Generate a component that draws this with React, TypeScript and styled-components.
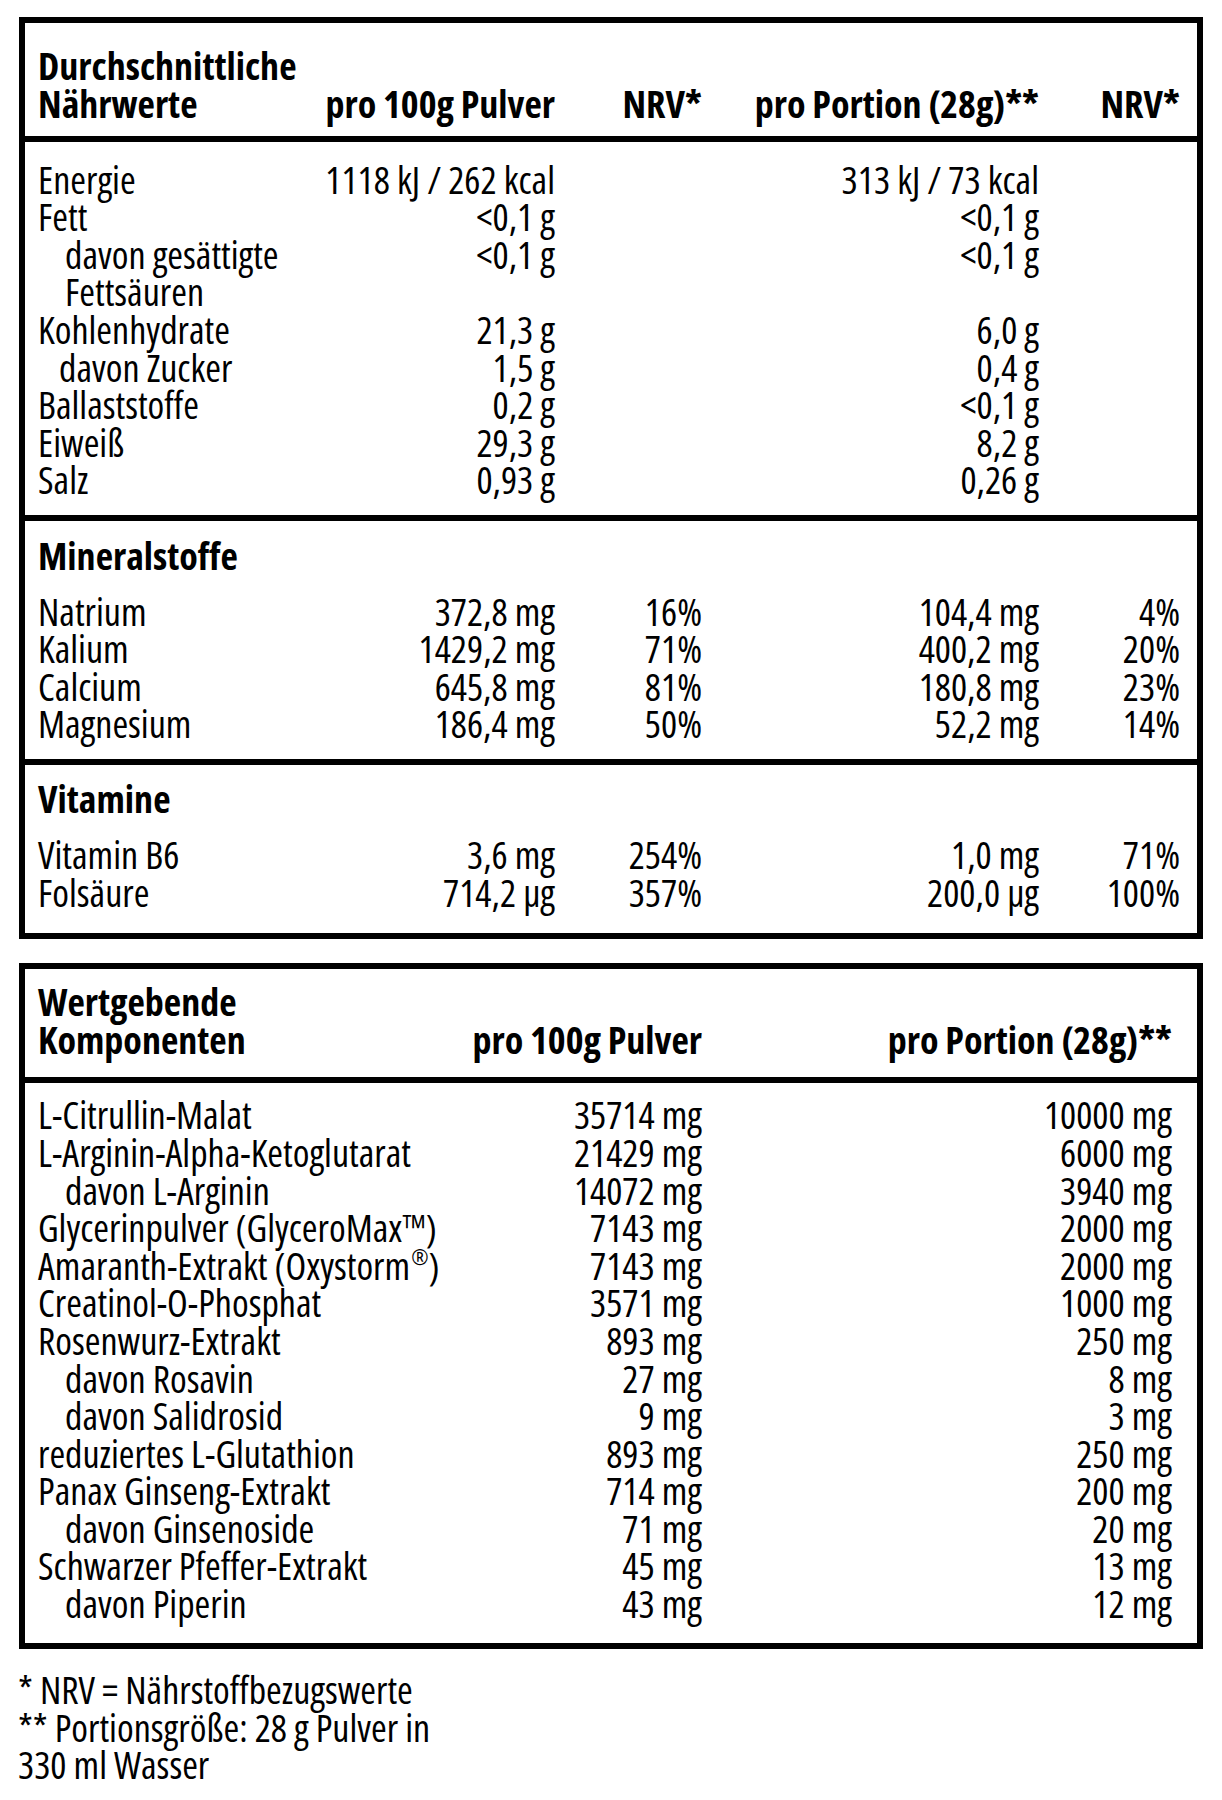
import React from 'react'
import styled, { createGlobalStyle } from 'styled-components'

const GlobalStyle = createGlobalStyle`
  body {
    margin: 0;
    background: #fff;
    color: #000;
    font-family: "Open Sans", "Liberation Sans", sans-serif;
    font-stretch: 75%;
  }
`

const Page = styled.div`
  width: 1222px;
  padding: 17px 0 0 19px;
  box-sizing: border-box;
  font-size: 38px;
  line-height: 37.6px;
`

const Panel = styled.div<{ $gap?: number }>`
  width: 1184px;
  box-sizing: border-box;
  border: 6px solid #000;
  margin-top: ${(p) => p.$gap || 0}px;
`

const Section = styled.div<{ $top: number; $bottom: number; $divider?: boolean; $right: number }>`
  padding: ${(p) => `${p.$top}px ${p.$right}px ${p.$bottom}px 13px`};
  border-top: ${(p) => (p.$divider ? '6px solid #000' : 'none')};
`

const Grid = styled.div<{ $cols: string }>`
  display: grid;
  grid-template-columns: ${(p) => p.$cols};
  align-items: end;
`

const Cell = styled.div<{ $right?: boolean; $bold?: boolean; $indent?: number }>`
  text-align: ${(p) => (p.$right ? 'right' : 'left')};
  font-weight: ${(p) => (p.$bold ? 700 : 400)};
  padding-left: ${(p) => p.$indent || 0}px;
  white-space: nowrap;
`

const SectionTitle = styled.div`
  font-weight: 700;
  margin-bottom: 18.4px;
`

const Reg = styled.span`
  font-size: 0.55em;
  vertical-align: 0.7em;
  line-height: 0;
  margin-left: 1px;
`

const Footnote = styled.div`
  margin: 22.5px 0 0 -1px;
`

// column tracks, label first, values right aligned
const COLS1 = '280px 237px 147px 337px 141px'
const COLS2 = '420px 244px 470px'

type Row = [React.ReactNode, string, string?, string?, string?, number?]

const naehrwerte: Row[] = [
  ['Energie', '1118 kJ / 262 kcal', '', '313 kJ / 73 kcal', ''],
  ['Fett', '<0,1 g', '', '<0,1 g', ''],
  ['davon gesättigte', '<0,1 g', '', '<0,1 g', '', 27],
  ['Fettsäuren', '', '', '', '', 27],
  ['Kohlenhydrate', '21,3 g', '', '6,0 g', ''],
  ['davon Zucker', '1,5 g', '', '0,4 g', '', 21],
  ['Ballaststoffe', '0,2 g', '', '<0,1 g', ''],
  ['Eiweiß', '29,3 g', '', '8,2 g', ''],
  ['Salz', '0,93 g', '', '0,26 g', ''],
]

const mineralstoffe: Row[] = [
  ['Natrium', '372,8 mg', '16%', '104,4 mg', '4%'],
  ['Kalium', '1429,2 mg', '71%', '400,2 mg', '20%'],
  ['Calcium', '645,8 mg', '81%', '180,8 mg', '23%'],
  ['Magnesium', '186,4 mg', '50%', '52,2 mg', '14%'],
]

const vitamine: Row[] = [
  ['Vitamin B6', '3,6 mg', '254%', '1,0 mg', '71%'],
  ['Folsäure', '714,2 µg', '357%', '200,0 µg', '100%'],
]

type CompRow = [React.ReactNode, string, string, number?]

const komponenten: CompRow[] = [
  ['L-Citrullin-Malat', '35714 mg', '10000 mg'],
  ['L-Arginin-Alpha-Ketoglutarat', '21429 mg', '6000 mg'],
  ['davon L-Arginin', '14072 mg', '3940 mg', 27],
  ['Glycerinpulver (GlyceroMax™)', '7143 mg', '2000 mg'],
  [<>Amaranth-Extrakt (Oxystorm<Reg>®</Reg>)</>, '7143 mg', '2000 mg'],
  ['Creatinol-O-Phosphat', '3571 mg', '1000 mg'],
  ['Rosenwurz-Extrakt', '893 mg', '250 mg'],
  ['davon Rosavin', '27 mg', '8 mg', 27],
  ['davon Salidrosid', '9 mg', '3 mg', 27],
  ['reduziertes L-Glutathion', '893 mg', '250 mg'],
  ['Panax Ginseng-Extrakt', '714 mg', '200 mg'],
  ['davon Ginsenoside', '71 mg', '20 mg', 27],
  ['Schwarzer Pfeffer-Extrakt', '45 mg', '13 mg'],
  ['davon Piperin', '43 mg', '12 mg', 27],
]

const NutrientRows = ({ rows }: { rows: Row[] }) => (
  <Grid $cols={COLS1}>
    {rows.map(([label, a, b, c, d, indent], i) => (
      <React.Fragment key={`n-${i}`}>
        <Cell $indent={indent}>{label}</Cell>
        <Cell $right>{a}</Cell>
        <Cell $right>{b}</Cell>
        <Cell $right>{c}</Cell>
        <Cell $right>{d}</Cell>
      </React.Fragment>
    ))}
  </Grid>
)

const App = () => {
  return (
    <Page>
      <GlobalStyle />
      <Panel>
        <Section $top={24} $bottom={14} $right={17}>
          <Grid $cols={COLS1}>
            <Cell $bold>
              Durchschnittliche
              <br />
              Nährwerte
            </Cell>
            <Cell $right $bold>pro 100g Pulver</Cell>
            <Cell $right $bold>NRV*</Cell>
            <Cell $right $bold>pro Portion (28g)**</Cell>
            <Cell $right $bold>NRV*</Cell>
          </Grid>
        </Section>
        <Section $divider $top={18.5} $bottom={16} $right={17}>
          <NutrientRows rows={naehrwerte} />
        </Section>
        <Section $divider $top={15.5} $bottom={16} $right={17}>
          <SectionTitle>Mineralstoffe</SectionTitle>
          <NutrientRows rows={mineralstoffe} />
        </Section>
        <Section $divider $top={15.5} $bottom={21.3} $right={17}>
          <SectionTitle>Vitamine</SectionTitle>
          <NutrientRows rows={vitamine} />
        </Section>
      </Panel>

      <Panel $gap={24}>
        <Section $top={14.5} $bottom={18.3} $right={25}>
          <Grid $cols={COLS2}>
            <Cell $bold>
              Wertgebende
              <br />
              Komponenten
            </Cell>
            <Cell $right $bold>pro 100g Pulver</Cell>
            <Cell $right $bold>pro Portion (28g)**</Cell>
          </Grid>
        </Section>
        <Section $divider $top={13.5} $bottom={20} $right={25}>
          <Grid $cols={COLS2}>
            {komponenten.map(([label, a, b, indent], i) => (
              <React.Fragment key={`k-${i}`}>
                <Cell $indent={indent}>{label}</Cell>
                <Cell $right>{a}</Cell>
                <Cell $right>{b}</Cell>
              </React.Fragment>
            ))}
          </Grid>
        </Section>
      </Panel>

      <Footnote>
        * NRV = Nährstoffbezugswerte
        <br />
        ** Portionsgröße: 28 g Pulver in
        <br />
        330 ml Wasser
      </Footnote>
    </Page>
  )
}

export default App
